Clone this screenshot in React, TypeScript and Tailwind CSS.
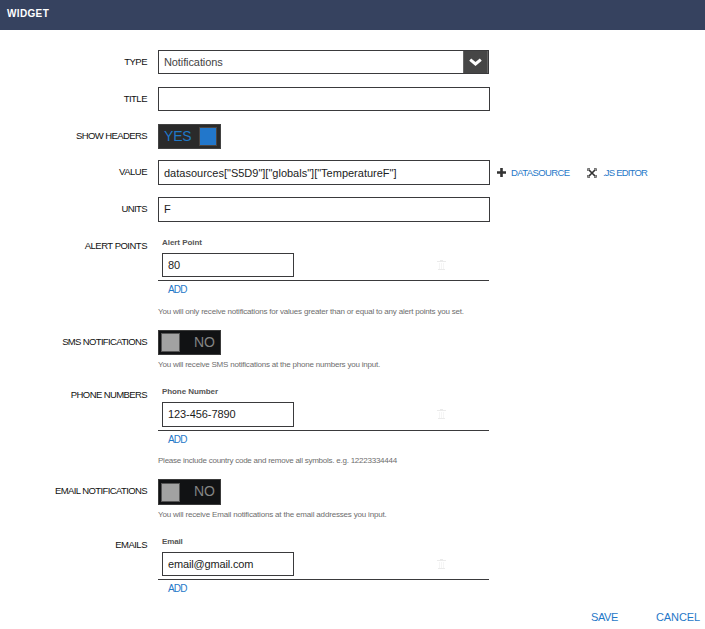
import type { ReactNode } from 'react';

const LINK = 'text-[#1f78c8]';

function Row({ label, className, labelClass, children }: { label: string; className: string; labelClass: string; children: ReactNode }) {
  return (
    <div className={`flex items-start ${className}`}>
      <div className={`w-[147px] shrink-0 whitespace-nowrap pt-1 text-right text-[9.5px] leading-4 text-[#111] ${labelClass}`}>{label}</div>
      <div className="ml-[11px]">{children}</div>
    </div>
  );
}

function Field({ value, className }: { value: string; className: string }) {
  return (
    <div className={`flex items-center border border-[#3a3a3c] bg-white pl-[5px] text-[11px] text-[#1c1c1c] ${className}`}>
      <span className="whitespace-nowrap">{value}</span>
    </div>
  );
}

function Toggle({ on, className }: { on: boolean; className: string }) {
  return on ? (
    <div className={`flex w-[63px] items-center justify-between border border-[#424242] bg-[#2a2a2a] pl-[5px] pr-[3px] text-[14px] leading-4 ${LINK} ${className}`}>
      <span className="pb-0.5 tracking-[-0.2px]">YES</span>
      <span className="h-[19px] w-[18px] border border-[#4a4542] bg-[#2277cb]" />
    </div>
  ) : (
    <div className={`flex w-[63px] items-center justify-between border border-[#3a3a3a] bg-[#111214] pl-[2px] pr-[5px] text-[14px] leading-4 text-[#858585] ${className}`}>
      <span className="size-[19px] border border-[#555] bg-[#a2a2a2]" />
      <span className="pb-0.5">NO</span>
    </div>
  );
}

function Hint({ text, className }: { text: string; className: string }) {
  return <div className={`h-4 whitespace-nowrap text-[8px] leading-[18px] text-[#6e6e6e] ${className}`}>{text}</div>;
}

function Trash() {
  return (
    <svg className="ml-[143px] shrink-0" width="9" height="11" viewBox="0 0 9 11" shapeRendering="crispEdges">
      <path d="M3 0h3v1H3zM0 1h9v1H0zM1 9h7v1H1z" fill="#ebebeb" />
      <path d="M2 3h1v6H2zM4 3h1v6H4zM6 3h1v6H6z" fill="#f5f5f5" />
    </svg>
  );
}

function ListEditor({ header, headerClass, value, fieldClass }: { header: string; headerClass: string; value: string; fieldClass: string }) {
  return (
    <div className="w-[331px]">
      <div className={`h-4 pl-1 text-[8px] font-bold leading-[18px] text-[#555] ${headerClass}`}>{header}</div>
      <div className="mt-[3px] flex items-center border-b border-[#3a3a3c] pb-[3px] pl-1">
        <Field value={value} className={`w-[132px] ${fieldClass}`} />
        <Trash />
      </div>
      <div className={`h-[18px] pl-[10px] text-[10px] leading-[18px] tracking-[-0.8px] ${LINK}`}>ADD</div>
    </div>
  );
}

export default function App() {
  return (
    <div className="h-[629px] w-[705px] overflow-hidden bg-white font-['Liberation_Sans',Arial,sans-serif]">
      <header className="h-[30px] bg-[#36425f] pl-[7px] text-[10px] font-bold leading-[28px] tracking-[0.35px] text-white">WIDGET</header>
      <main className="pt-5">
        <Row label="TYPE" className="h-6" labelClass="tracking-[-0.5px]">
          <div className="flex h-6 w-[331px] border border-[#3a3a3c]">
            <div className="flex flex-1 items-center pl-[5px] text-[11px] tracking-[-0.1px] text-[#444]"><span>Notifications</span></div>
            <div className="flex w-[25px] items-center justify-center border-x border-[#666] bg-[#464646]">
              <svg width="13" height="9" viewBox="0 0 13 9"><path d="M1.2 1.6 6.5 6 11.8 1.6" fill="none" stroke="#fff" strokeWidth="3" /></svg>
            </div>
          </div>
        </Row>
        <Row label="TITLE" className="mt-[13px] h-6" labelClass="tracking-[-0.5px]">
          <Field value="" className="h-6 w-[332px]" />
        </Row>
        <Row label="SHOW HEADERS" className="mt-[13px] h-[25px]" labelClass="tracking-[-0.6px]">
          <Toggle on className="h-[25px]" />
        </Row>
        <Row label="VALUE" className="mt-[11px] h-[25px]" labelClass="tracking-[-0.5px]">
          <div className="flex items-center">
            <Field value={'datasources["S5D9"]["globals"]["TemperatureF"]'} className="h-[25px] w-[332px] pt-0.5" />
            <svg className="ml-[7px]" width="9" height="9" viewBox="0 0 9 9"><path d="M4.5 0v9M0 4.5h9" stroke="#333" strokeWidth="2.6" /></svg>
            <span className={`ml-[5px] w-[59px] whitespace-nowrap pt-px text-[9.5px] tracking-[-0.6px] ${LINK}`}>DATASOURCE</span>
            <svg className="ml-[17px]" width="10" height="10" viewBox="0 0 10 10">
              <path d="M1.5 1.5 8.5 8.5M8.5 1.5 1.5 8.5" stroke="#333" strokeWidth="1.7" />
              <path d="M.5 3V.5H3M7 .5h2.5V3M9.5 7v2.5H7M3 9.5H.5V7" fill="none" stroke="#777" />
            </svg>
            <span className={`ml-[6px] whitespace-nowrap pt-px text-[9.5px] tracking-[-0.8px] ${LINK}`}>.JS EDITOR</span>
          </div>
        </Row>
        <Row label="UNITS" className="mt-[12px] h-[25px]" labelClass="tracking-[-0.6px]">
          <Field value="F" className="h-[25px] w-[332px]" />
        </Row>
        <Row label="ALERT POINTS" className="mt-[12px]" labelClass="tracking-[-0.5px]">
          <ListEditor header="Alert Point" headerClass="tracking-[-0.05px]" value="80" fieldClass="h-6" />
          <Hint text="You will only receive notifications for values greater than or equal to any alert points you set." className="mt-1 tracking-[-0.2px]" />
        </Row>
        <Row label="SMS NOTIFICATIONS" className="mt-[11px]" labelClass="tracking-[-0.65px]">
          <Toggle on={false} className="h-[25px]" />
          <Hint text="You will receive SMS notifications at the phone numbers you input." className="mt-px tracking-[-0.21px]" />
        </Row>
        <Row label="PHONE NUMBERS" className="mt-[11px]" labelClass="tracking-[-0.6px]">
          <ListEditor header="Phone Number" headerClass="tracking-[-0.08px]" value="123-456-7890" fieldClass="h-[25px] tracking-[-0.08px]" />
          <Hint text="Please include country code and remove all symbols. e.g. 12223334444" className="mt-[3px] tracking-[-0.24px]" />
        </Row>
        <Row label="EMAIL NOTIFICATIONS" className="mt-[11px]" labelClass="tracking-[-0.6px]">
          <Toggle on={false} className="h-[26px]" />
          <Hint text="You will receive Email notifications at the email addresses you input." className="mt-px tracking-[-0.18px]" />
        </Row>
        <Row label="EMAILS" className="mt-[11px]" labelClass="tracking-[-0.5px]">
          <ListEditor header="Email" headerClass="tracking-[-0.15px]" value="email@gmail.com" fieldClass="h-6 tracking-[-0.15px]" />
        </Row>
      </main>
      <footer className={`mt-[11px] flex justify-between pl-[591px] pr-[5px] text-[11px] leading-4 ${LINK}`}>
        <span className="tracking-[-0.4px]">SAVE</span>
        <span className="tracking-[-0.1px]">CANCEL</span>
      </footer>
    </div>
  );
}
